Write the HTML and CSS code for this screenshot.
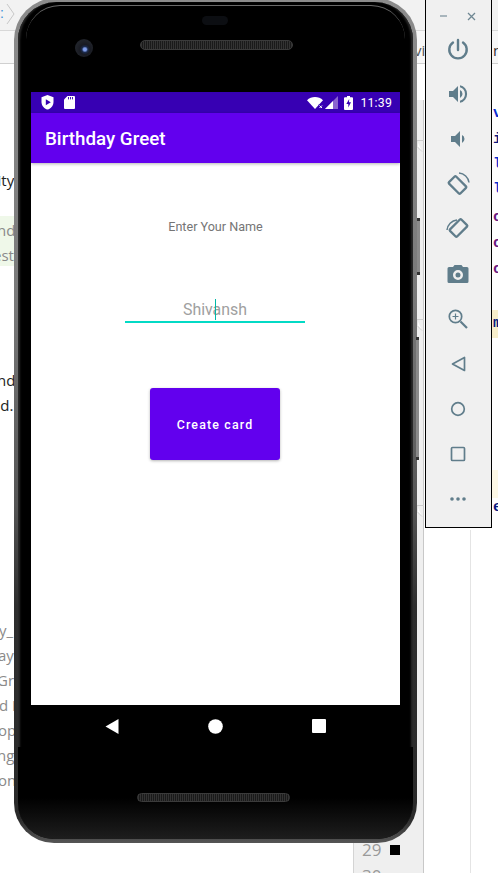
FILE: index.html
```html
<!DOCTYPE html>
<html lang="en">
<head>
<meta charset="utf-8">
<title>Birthday Greet</title>
<link rel="stylesheet" href="styles.css">
</head>
<body>
<div class="desktop">
  <div class="ide-top"></div>
  <div class="ide-tabs"></div>
  <svg class="crumb" width="10" height="24" viewBox="0 0 10 24"><path d="M1 2l7 10-7 10" fill="none" stroke="#c8c8c8"/></svg>
  <span class="crumb-dot">:</span>

  <div class="frag-green"></div>
  <div class="left-code">
    <span class="lc dark l1">vity</span>
    <span class="lc grey l2">nd</span>
    <span class="lc grey l3">est</span>
    <span class="lc dark l4">nd</span>
    <span class="lc dark l5">nd.</span>
    <span class="lc grey l6">y_</span>
    <span class="lc grey l7">ay</span>
    <span class="lc grey l8">Gra</span>
    <span class="lc grey l9">d I</span>
    <span class="lc grey l10">op</span>
    <span class="lc grey l11">ng</span>
    <span class="lc grey l12">on</span>
  </div>

  <div class="gutter">
    <svg class="fold f1" width="7" height="12" viewBox="0 0 7 12"><path d="M0 .5h7M0 .5v6l5 5" fill="#fff" stroke="#cfcfcf"/></svg>
    <svg class="fold f2" width="7" height="12" viewBox="0 0 7 12"><path d="M0 .5h7M0 .5v6l5 5" fill="#fff" stroke="#cfcfcf"/></svg>
    <svg class="fold f3" width="7" height="12" viewBox="0 0 7 12"><path d="M0 .5h7M0 .5v6l5 5" fill="#fff" stroke="#cfcfcf"/></svg>
    <span class="gut-num n29">29</span>
    <span class="gut-mark"></span>
    <span class="gut-num n30">30</span>
  </div>
  <div class="gutter-line"></div>
  <div class="tab-vi">vi</div>
  <div class="tab-n">n</div>
  <div class="hl-yellow"></div>
  <div class="hl-cream"></div>
  <div class="right-code">
    <span class="rc blue r1">v</span>
    <span class="rc navy r2">i</span>
    <span class="rc blue r3">l</span>
    <span class="rc blue r4">l</span>
    <span class="rc purple r5">c</span>
    <span class="rc purple r6">c</span>
    <span class="rc purple r7">c</span>
    <span class="rc navy r8">m</span>
    <span class="rc navy r9">e</span>
  </div>

  <div class="phone">
    <div class="side-btn btn-power"></div>
    <div class="side-btn btn-volume"></div>
    <div class="phone-body">
      <div class="bezel-top">
        <div class="earpiece-small"></div>
        <div class="camera"></div>
        <div class="speaker speaker-top"></div>
      </div>
      <main class="screen">
        <div class="status-bar">
          <div class="status-left">
            <svg width="13" height="15" viewBox="0 0 13 15"><path d="M6.500 0L0.500 2.300v4.600c0 3.600 2.500 6.800 6 7.600 3.500-.8 6-4 6-7.600V2.300z" fill="#fff"/><path d="M4.800 4.200v6l5-3z" fill="#3700b3"/></svg>
            <svg width="11" height="13" viewBox="0 0 11 13"><path d="M3.500 0H10a1 1 0 0 1 1 1v11a1 1 0 0 1-1 1H1a1 1 0 0 1-1-1V3.500z" fill="#fff"/><path d="M4.500 1v2.400M6.500 1v2.400M8.500 1v2.400" stroke="#3700b3" stroke-width=".9"/></svg>
          </div>
          <div class="status-right">
            <svg width="17" height="12" viewBox="0 0 17 12"><path d="M0 3.200C2.200 1.200 5 0 8 0s5.800 1.200 8 3.200L8 12z" fill="#fff"/><path d="M11.500 7.500h5.500v4.500h-5.500z" fill="#3700b3"/><path d="M12.500 8.500l2.500 2.500M15 8.500l-2.500 2.500" stroke="#fff" stroke-width="1"/></svg>
            <svg class="sig" width="13" height="13" viewBox="0 0 13 13"><path d="M0 13L13 0v13z" fill="#8a63cf"/><path d="M0 13L8 5v8z" fill="#fff"/></svg>
            <svg class="bat" width="9" height="14" viewBox="0 0 9 14"><path d="M3 0h3v1.300h2a1 1 0 0 1 1 1V13a1 1 0 0 1-1 1H1a1 1 0 0 1-1-1V2.300a1 1 0 0 1 1-1h2z" fill="#fff"/><path d="M5.200 3L2.300 8h2v3.400L7 6.300H5z" fill="#3700b3"/></svg>
            <span class="clock">11:39</span>
          </div>
        </div>
        <header class="app-bar">Birthday Greet</header>
        <section class="content">
          <p class="prompt">Enter Your Name</p>
          <div class="field">
            <span class="field-text">Shivansh</span>
            <span class="caret"></span>
          </div>
          <button class="cta" type="button">Create card</button>
        </section>
      </main>
      <nav class="nav-bar">
        <svg width="14" height="15" viewBox="0 0 14 15"><path d="M13.500 0v15L0.500 7.500z" fill="#fff"/></svg>
        <svg width="15" height="15" viewBox="0 0 15 15"><circle cx="7.500" cy="7.500" r="7.300" fill="#fff"/></svg>
        <svg width="14" height="14" viewBox="0 0 14 14"><rect width="14" height="14" rx="1" fill="#fff"/></svg>
      </nav>
      <div class="bezel-bottom">
        <div class="speaker speaker-bottom"></div>
      </div>
    </div>
  </div>

  <aside class="tools">
    <div class="tools-head">
      <span class="min"></span>
      <svg width="9" height="9" viewBox="0 0 9 9"><path d="M1 1l7 7M8 1L1 8" stroke="#6f8793" stroke-width="1.300"/></svg>
    </div>
    <div class="tools-list">
      <svg class="tool" width="24" height="24" viewBox="0 0 24 24"><path d="M12 3v10" stroke="#607d8b" stroke-width="2.400" fill="none" stroke-linecap="round"/><path d="M7 5.600a8.700 8.700 0 1 0 10 0" stroke="#607d8b" stroke-width="2.400" fill="none" stroke-linecap="round"/></svg>
      <svg class="tool" width="24" height="24" viewBox="0 0 24 24"><path d="M3 9v6h4l5 5V4L7 9zm13.500 3A4.500 4.500 0 0 0 14 8v8a4.500 4.500 0 0 0 2.500-4zM14 3.200v2.100a7 7 0 0 1 0 13.400v2.100a9 9 0 0 0 0-17.600z" fill="#607d8b"/></svg>
      <svg class="tool" width="24" height="24" viewBox="0 0 24 24"><path d="M5 9v6h4l5 5V4L9 9zm13.500 3A4.500 4.500 0 0 0 16 8v8a4.500 4.500 0 0 0 2.500-4z" fill="#607d8b"/></svg>
      <svg class="tool" width="24" height="24" viewBox="0 0 24 24"><rect x="6.500" y="5" width="10" height="16" rx="1" transform="rotate(-45 11.500 13)" fill="none" stroke="#607d8b" stroke-width="2.300"/><path d="M13 1a11 11 0 0 1 10 9.500" fill="none" stroke="#607d8b" stroke-width="1.500"/></svg>
      <svg class="tool" width="24" height="24" viewBox="0 0 24 24"><rect x="7.500" y="3" width="10" height="16" rx="1" transform="rotate(45 12.500 11)" fill="none" stroke="#607d8b" stroke-width="2.300"/><path d="M1 13a11 11 0 0 1 10-10" fill="none" stroke="#607d8b" stroke-width="1.500"/></svg>
      <svg class="tool" width="24" height="24" viewBox="0 0 24 24"><path fill-rule="evenodd" d="M8.500 3L7 5H3a1.500 1.500 0 0 0-1.500 1.500v13A1.500 1.500 0 0 0 3 21h18a1.500 1.500 0 0 0 1.500-1.500v-13A1.500 1.500 0 0 0 21 5h-4l-1.500-2zM12 8a5 5 0 1 1 0 10 5 5 0 0 1 0-10zm0 2.500a2.500 2.500 0 1 0 0 5 2.500 2.500 0 0 0 0-5z" fill="#607d8b"/></svg>
      <svg class="tool" width="24" height="24" viewBox="0 0 24 24"><circle cx="9.500" cy="9.500" r="6.200" fill="none" stroke="#607d8b" stroke-width="1.700"/><path d="M14.500 14.500l6.500 6.500" stroke="#607d8b" stroke-width="2.200"/><path d="M9.500 6.500v6M6.500 9.500h6" stroke="#607d8b" stroke-width="1.200"/></svg>
      <svg class="tool" width="24" height="24" viewBox="0 0 24 24"><path d="M18.500 5.500v13L6.500 12z" fill="none" stroke="#607d8b" stroke-width="1.700" stroke-linejoin="round"/></svg>
      <svg class="tool" width="24" height="24" viewBox="0 0 24 24"><circle cx="12" cy="12" r="6.300" fill="none" stroke="#607d8b" stroke-width="1.700"/></svg>
      <svg class="tool" width="24" height="24" viewBox="0 0 24 24"><rect x="5.500" y="5.500" width="13" height="13" rx="1" fill="none" stroke="#607d8b" stroke-width="1.700"/></svg>
      <svg class="tool" width="24" height="24" viewBox="0 0 24 24"><circle cx="6" cy="12" r="1.800" fill="#607d8b"/><circle cx="12" cy="12" r="1.800" fill="#607d8b"/><circle cx="18" cy="12" r="1.800" fill="#607d8b"/></svg>
    </div>
  </aside>
</div>
</body>
</html>
```
FILE: styles.css
```css
* { box-sizing: border-box; }
html, body { margin: 0; padding: 0; }
body { width: 498px; height: 873px; overflow: hidden; background: #fff; font-family: Roboto, "Liberation Sans", sans-serif; }
.desktop { position: relative; width: 498px; height: 873px; overflow: hidden; background: #fff; }

/* IDE behind the emulator */
.ide-top { position: absolute; left: 0; top: 0; width: 498px; height: 31px; background: #f2f2f2; border-bottom: 1px solid #d8d8d8; }
.ide-tabs { position: absolute; left: 0; top: 31px; width: 498px; height: 33px; background: #f7f7f7; border-bottom: 1px solid #d0d0d0; }
.crumb { position: absolute; left: 6px; top: 2px; }
.crumb-dot { position: absolute; left: 0; top: 5px; font: 14px "Liberation Sans", sans-serif; color: #3a8fd8; }
.frag-green { position: absolute; left: 0; top: 216px; width: 16px; height: 50px; background: #eff8e9; }
.left-code, .right-code { position: absolute; top: 0; font-family: "Open Sans", "Liberation Sans", sans-serif; }
.left-code { left: 0; width: 15px; height: 873px; overflow: hidden; }
.lc { position: absolute; left: 0; font-size: 15px; line-height: 20px; white-space: nowrap; }
.lc.dark { color: #222; }
.lc.grey { color: #8a8a8a; }
.l1 { left: -10px; top: 170px; }
.l2 { top: 220px; left: -3px; }
.l3 { top: 245px; left: -7px; }
.l4 { top: 370px; left: -3px; }
.l5 { top: 395px; left: -9px; }
.l6 { top: 620px; left: -1px; }
.l7 { top: 645px; left: -2px; }
.l8 { top: 670px; left: -3px; }
.l9 { top: 695px; left: -1px; }
.l10 { top: 720px; left: -2px; }
.l11 { top: 745px; left: -3px; }
.l12 { top: 770px; left: -2px; }

.gutter { position: absolute; left: 353px; top: 100px; width: 71px; height: 773px; background: #efefef; border-left: 1px solid #d4d4d4; border-right: 1px solid #c8c8c8; }
.fold { position: absolute; left: 63px; }
.f1 { top: 40px; }
.f2 { top: 219px; }
.f3 { top: 405px; }
.gut-num { position: absolute; left: 8px; font: 17px "Open Sans", sans-serif; color: #9a9a9a; line-height: 20px; }
.n29 { top: 740px; }
.n30 { top: 766px; }
.gut-mark { position: absolute; left: 36px; top: 745px; width: 10px; height: 10px; background: #000; }
.gutter-line { position: absolute; left: 470px; top: 530px; width: 1px; height: 343px; background: #e4e4e4; }
.tab-vi { position: absolute; left: 414px; top: 40px; font: 15px "Open Sans", sans-serif; color: #555; }
.tab-n { position: absolute; left: 493px; top: 40px; font: 15px "Open Sans", sans-serif; color: #333; }
.hl-yellow { position: absolute; left: 492px; top: 310px; width: 6px; height: 28px; background: #f7eecb; }
.hl-cream { position: absolute; left: 492px; top: 470px; width: 6px; height: 28px; background: #fdf8e6; }
.right-code { left: 493px; width: 5px; height: 873px; overflow: hidden; }
.rc { position: absolute; left: 0; font: 700 15px/20px "Liberation Mono", monospace; }
.rc.blue { color: #0a2fd0; }
.rc.navy { color: #0a1a80; }
.rc.purple { color: #6a1b80; }
.r1 { top: 104px; }
.r2 { top: 130px; }
.r3 { top: 155px; }
.r4 { top: 180px; }
.r5 { top: 208px; }
.r6 { top: 234px; }
.r7 { top: 260px; }
.r8 { top: 314px; }
.r9 { top: 498px; }

/* Phone */
.phone {
  position: absolute; left: 14px; top: -2px; width: 403px; height: 845px;
  padding: 4px;
  background: linear-gradient(to bottom, #8c8c8c 0, #7a7a7a 35%, #555 60%, #2e2e2e 72%, #2a2a2a 97%, #555 100%);
  border-radius: 42px 42px 40px 40px;
}
.phone-body {
  position: relative; height: 100%;
  display: flex; flex-direction: column; padding: 0 13px;
  background: #000;
  border-radius: 38px 38px 36px 36px;
  overflow: hidden;
  box-shadow: inset 3px 0 2px -1px #2a2a2a, inset -3px 0 2px -1px #2a2a2a;
}
.phone-body::before { content: ""; position: absolute; left: 8px; right: 8px; top: 3px; height: 40px; border-top: 1.500px solid #6a6a6a; border-radius: 34px 34px 0 0; pointer-events: none; }
.side-btn { position: absolute; width: 3px; background: #8a8a8a; border-top: 3px solid #333; border-bottom: 3px solid #333; }
.btn-power { left: 403px; top: 220px; height: 57px; }
.btn-volume { left: 402px; top: 339px; height: 123px; }
.bezel-top { position: relative; height: 90px; flex: none; margin: 0 -13px; }
.earpiece-small { position: absolute; left: 184px; top: 14px; width: 26px; height: 9px; border-radius: 5px; background: #0c0e12; }
.camera { position: absolute; left: 57px; top: 37px; width: 18px; height: 18px; border-radius: 50%; background: radial-gradient(circle at 55% 58%, #7d9be8 0 1.500px, #1b2a4c 3px, #181a22 5px, #20232a 9px); }
.speaker { position: absolute; height: 10px; border-radius: 5px; background: repeating-linear-gradient(90deg, #333 0 1px, #1a1a1a 1px 2px); border: 1px solid #3b3b3b; }
.speaker-top { left: 122px; top: 38px; width: 153px; }
.speaker-bottom { left: 119px; top: 46px; width: 153px; height: 9px; }
.screen { flex: none; height: 613px; display: flex; flex-direction: column; background: #fff; }
.status-bar { flex: none; height: 21px; background: #3700b3; display: flex; justify-content: space-between; align-items: center; padding: 0 8px 0 10px; }
.status-left { display: flex; align-items: center; gap: 10px; }
.status-right { display: flex; align-items: center; }
.sig { margin-left: 1px; }
.bat { margin-left: 6px; }
.clock { margin-left: 7px; color: #fff; font-size: 12.300px; letter-spacing: .2px; }
.app-bar { flex: none; height: 50px; padding-left: 14px; background: #6200ee; color: #fff; font-size: 18.800px; font-weight: 500; line-height: 53px; box-shadow: 0 1px 3px rgba(0,0,0,.3); position: relative; }
.content { flex: 1; display: flex; flex-direction: column; align-items: center; background: #fff; }
.prompt { margin: 56px 0 0; font-size: 12.600px; line-height: 16px; color: #757575; }
.field { position: relative; width: 180px; height: 36px; margin: 52px 1px 0 0; border-bottom: 2px solid #03dac5; text-align: center; }
.field-text { display: block; font-size: 15.900px; line-height: 20px; padding-top: 13px; color: #a0a0a0; }
.caret { position: absolute; left: 90px; top: 12px; width: 1px; height: 21px; background: #00b8a8; }
.cta { margin: 65px 1px 0 0; width: 130px; height: 72px; padding-top: 1px; border: 0; border-radius: 3px; background: #6200ee; color: #fff; font: 500 12.400px Roboto, sans-serif; letter-spacing: 1.150px; box-shadow: 0 1px 3px rgba(0,0,0,.3); }
.nav-bar { flex: none; height: 42px; display: flex; align-items: center; padding-left: 74px; gap: 89px; }
.bezel-bottom { position: relative; flex: 1; margin: 0 -13px; background: linear-gradient(to bottom, #000 55%, #1e1e1e 100%); }

/* Emulator tool window */
.tools { position: absolute; left: 425px; top: -2px; width: 67px; height: 530px; background: #f0f0f0; border: 1px solid #000; display: flex; flex-direction: column; align-items: center; padding-right: 2px; }
.tools-head { flex: none; display: flex; align-items: center; justify-content: center; gap: 20px; height: 31px; padding-top: 3px; }
.min { width: 7px; height: 1.500px; background: #a8b5bc; }
.tools-list { display: flex; flex-direction: column; align-items: center; gap: 21px; padding-top: 7px; }
.tool { flex: none; }
```
